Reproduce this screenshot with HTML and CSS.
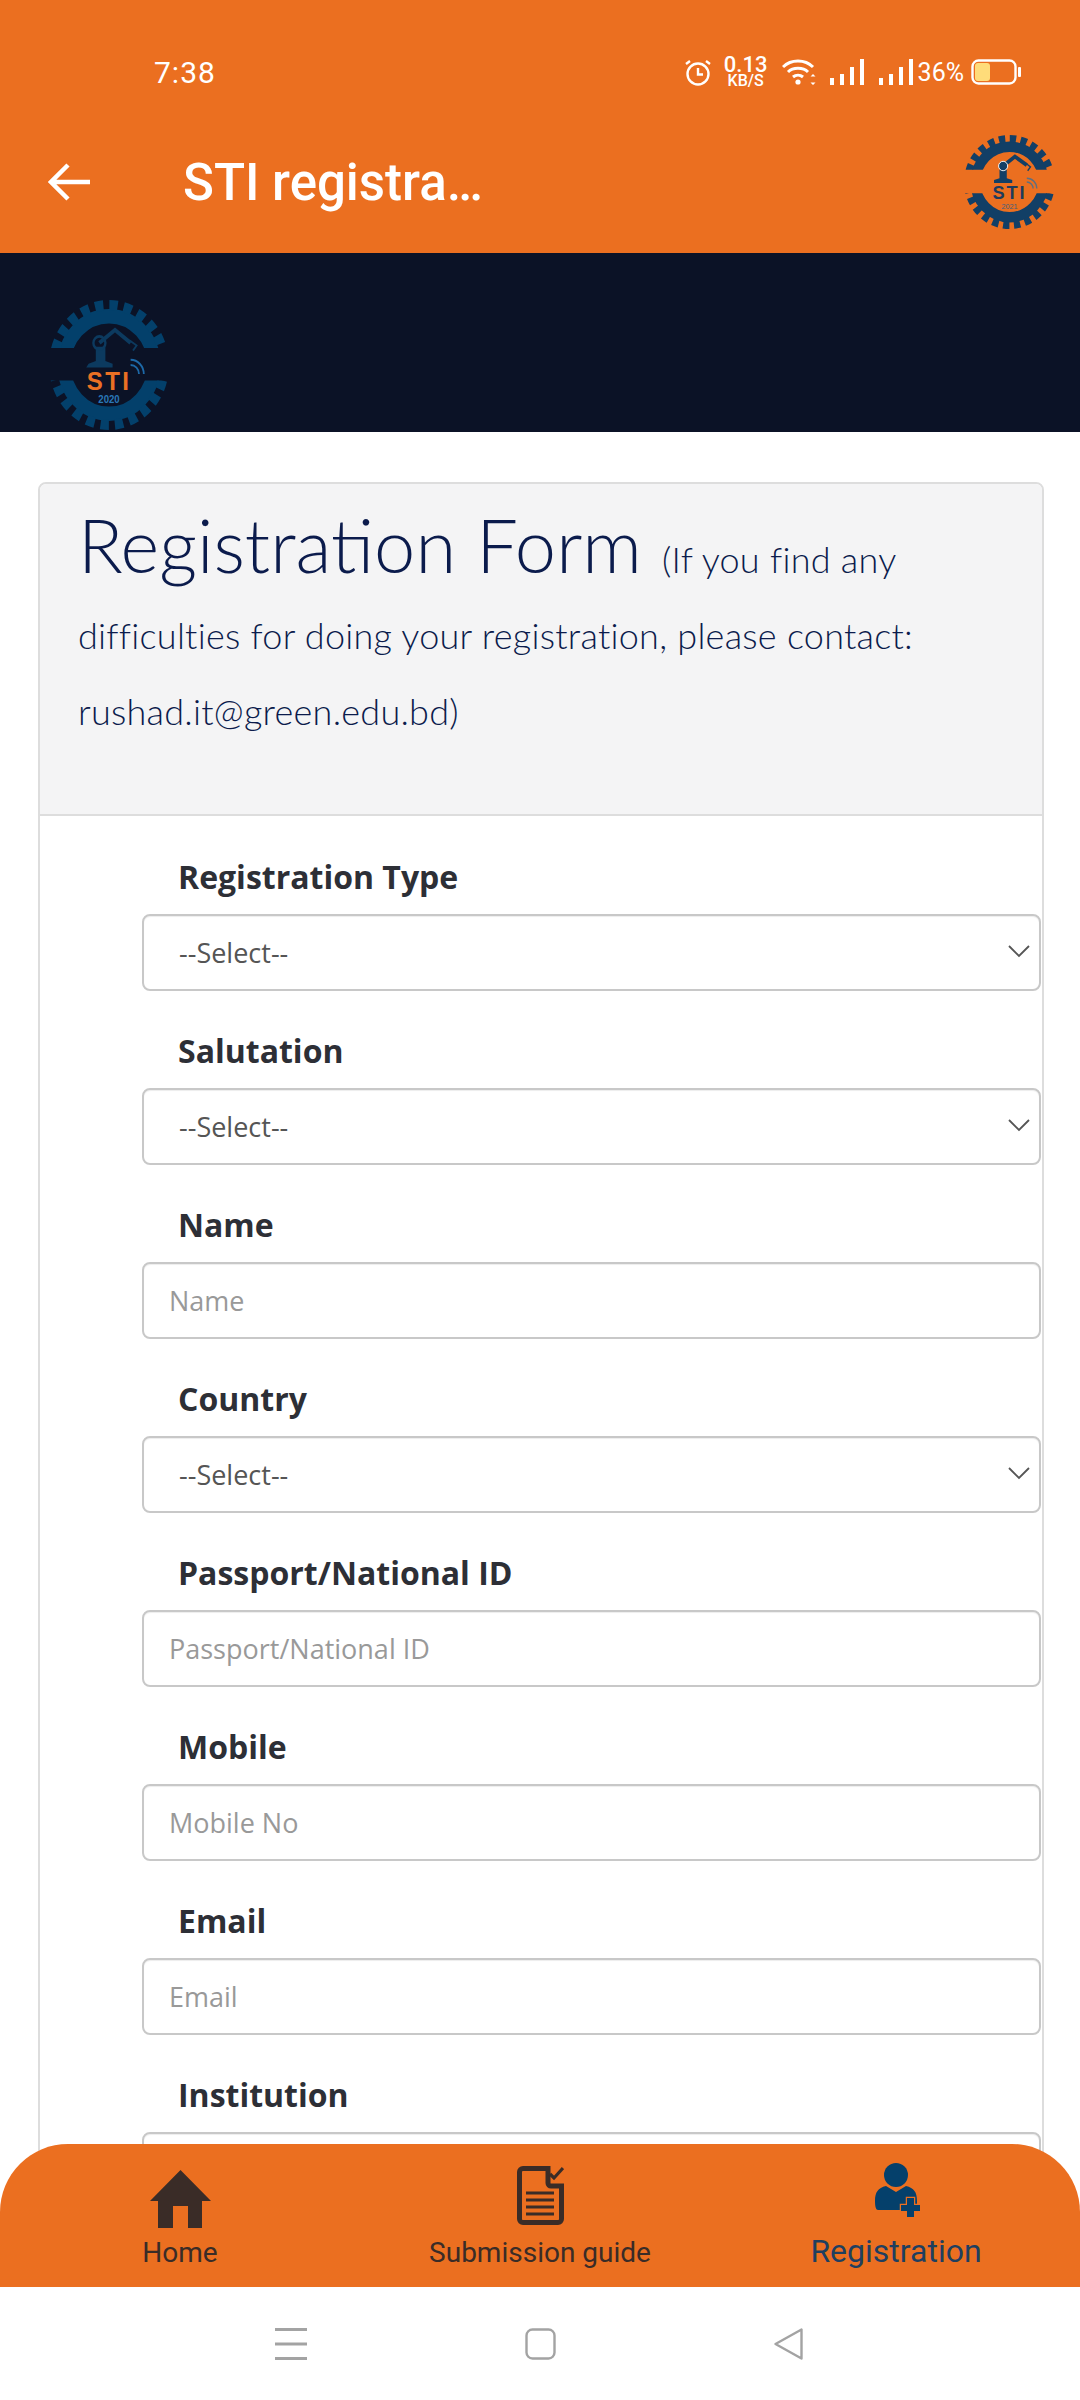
FILE: index.html
```html
<!DOCTYPE html>
<html lang="en">

<head>
    <meta charset="UTF-8">
    <meta name="viewport" content="width=device-width, initial-scale=1.0">
    <title>STI registration</title>
    <link rel="stylesheet" href="styles.css">
</head>

<body>
    <svg class="defs" width="0" height="0">
        <defs>
            <clipPath id="gearCut">
                <rect x="0" y="0" width="100" height="37"></rect>
                <rect x="0" y="62" width="100" height="38"></rect>
            </clipPath>
            <symbol id="gear" viewBox="0 0 100 100">
                <g clip-path="url(#gearCut)" fill="none" stroke="currentColor">
                    <circle cx="50" cy="50" r="37.5" stroke-width="11"></circle>
                    <circle cx="50" cy="50" r="46" stroke-width="8" stroke-dasharray="7 5.04"></circle>
                </g>
            </symbol>
        </defs>
    </svg>

    <div class="phone">
        <header class="appbar">
            <div class="status">
                <span class="time">7:38</span>
                <div class="status-icons">
                    <svg class="ic-alarm" width="26" height="27" viewBox="0 0 26 27" fill="none" stroke="#fff" stroke-width="2.4">
                        <circle cx="13" cy="15" r="10.5"></circle>
                        <path d="M13 9v6.5h5M1 5l4-3M25 5l-4-3"></path>
                    </svg>
                    <div class="speed"><span>0.13</span><span class="speed-unit">KB/S</span></div>
                    <svg class="ic-wifi" width="35" height="27" viewBox="0 0 35 27" fill="none" stroke="#fff" stroke-width="3">
                        <path d="M1 8c8-8 22-8 30 0M6 13c5-5 15-5 20 0M11 18c3-2.500 7-2.500 10 0"></path>
                        <circle cx="16" cy="23" r="2.600" fill="#fff" stroke="none"></circle>
                        <path d="M31 15l2.500 2.500h-5zM31 26l2.500-2.500h-5z" fill="#fff" stroke="none"></path>
                    </svg>
                    <svg class="ic-signal" width="34" height="27" viewBox="0 0 34 27" fill="#fff">
                        <rect x="0" y="19" width="4" height="7"></rect>
                        <rect x="10" y="15" width="4" height="11"></rect>
                        <rect x="20" y="8" width="4" height="18"></rect>
                        <rect x="30" y="0" width="4" height="26"></rect>
                    </svg>
                    <svg class="ic-signal ic-signal-2" width="34" height="27" viewBox="0 0 34 27" fill="#fff">
                        <rect x="0" y="19" width="4" height="7"></rect>
                        <rect x="10" y="15" width="4" height="11"></rect>
                        <rect x="20" y="8" width="4" height="18"></rect>
                        <rect x="30" y="0" width="4" height="26"></rect>
                    </svg>
                    <span class="percent">36%</span>
                    <svg class="ic-battery" width="50" height="26" viewBox="0 0 50 26">
                        <rect x="1.500" y="1.500" width="43" height="23" rx="6" fill="none" stroke="#fff" stroke-width="2.400"></rect>
                        <rect x="4" y="4" width="15" height="18" rx="3" fill="#ffdc7a"></rect>
                        <rect x="47" y="8" width="3" height="10" rx="1" fill="#fff"></rect>
                    </svg>
                </div>
            </div>
            <div class="titlebar">
                <svg class="back" width="42" height="40" viewBox="0 0 42 40" fill="none" stroke="#fff" stroke-width="4.500">
                    <path d="M42 20H4M20 3L3 20l17 17"></path>
                </svg>
                <h1 class="title">STI registra…</h1>
                <svg class="logo-small" width="91" height="94" viewBox="0 0 100 100" preserveAspectRatio="none">
                    <use href="#gear" width="100" height="100" class="gear-small"></use>
                    <path d="M33 51h20v-3l-6-2V37h-8v9l-6 2z" fill="#123f66"></path>
                    <path d="M43 33l13-10 13 9" fill="none" stroke="#123f66" stroke-width="4"></path>
                    <circle cx="43" cy="33" r="5" fill="#123f66" stroke="#fff" stroke-width="1"></circle>
                    <path d="M68 30l5 4-3 4" fill="none" stroke="#123f66" stroke-width="1.500"></path>
                    <path d="M69 50a7 7 0 0 1 7 7M69 46a11 11 0 0 1 11 11" fill="none" stroke="#5d6f80" stroke-width="1.500"></path>
                    <text x="50" y="68" class="logo-sti sti-dark">STI</text>
                    <text x="50" y="79" class="logo-year year-dark">2021</text>
                </svg>
            </div>
        </header>

        <div class="banner">
            <svg class="logo-big" width="120" height="130" viewBox="0 0 100 100" preserveAspectRatio="none">
                <use href="#gear" width="100" height="100" class="gear-big"></use>
                <path d="M31 52h22v-3l-6-2V36h-8v11l-6 2z" fill="#0c3a5f"></path>
                <path d="M42 33l13-10 13 10" fill="none" stroke="#0c3a5f" stroke-width="3"></path>
                <circle cx="42" cy="33" r="5" fill="none" stroke="#0c3a5f" stroke-width="2"></circle>
                <path d="M67 31l6 4-3 4" fill="none" stroke="#0c3a5f" stroke-width="1.500"></path>
                <path d="M68 50a7 7 0 0 1 7 7M68 46a11 11 0 0 1 11 11" fill="none" stroke="#1d69a8" stroke-width="1.500"></path>
                <text x="50" y="69" class="logo-sti sti-orange">STI</text>
                <text x="50" y="79" class="logo-year year-blue">2020</text>
            </svg>
        </div>

        <main class="card">
            <div class="card-head">
                <h2 class="form-title">Registration Form <small>(If you find any difficulties for doing your registration, please contact: rushad.it@green.edu.bd)</small></h2>
            </div>
            <form class="card-body">
                <div class="field">
                    <label for="regType">Registration Type</label>
                    <div class="select-wrap">
                        <select id="regType"><option>--Select--</option></select>
                        <svg class="chevron" width="22" height="13" viewBox="0 0 22 13" fill="none" stroke="#555" stroke-width="1.800"><path d="M1 1l10 10L21 1"></path></svg>
                    </div>
                </div>
                <div class="field">
                    <label for="salutation">Salutation</label>
                    <div class="select-wrap">
                        <select id="salutation"><option>--Select--</option></select>
                        <svg class="chevron" width="22" height="13" viewBox="0 0 22 13" fill="none" stroke="#555" stroke-width="1.800"><path d="M1 1l10 10L21 1"></path></svg>
                    </div>
                </div>
                <div class="field">
                    <label for="name">Name</label>
                    <input type="text" id="name" placeholder="Name">
                </div>
                <div class="field">
                    <label for="country">Country</label>
                    <div class="select-wrap">
                        <select id="country"><option>--Select--</option></select>
                        <svg class="chevron" width="22" height="13" viewBox="0 0 22 13" fill="none" stroke="#555" stroke-width="1.800"><path d="M1 1l10 10L21 1"></path></svg>
                    </div>
                </div>
                <div class="field">
                    <label for="passport">Passport/National ID</label>
                    <input type="text" id="passport" placeholder="Passport/National ID">
                </div>
                <div class="field">
                    <label for="mobile">Mobile</label>
                    <input type="text" id="mobile" placeholder="Mobile No">
                </div>
                <div class="field">
                    <label for="email">Email</label>
                    <input type="text" id="email" placeholder="Email">
                </div>
                <div class="field">
                    <label for="institution">Institution</label>
                    <input type="text" id="institution">
                </div>
            </form>
        </main>

        <div class="bottom">
            <nav class="tabbar">
                <a class="tab tab-home">
                    <svg width="61" height="58" viewBox="0 0 61 58" fill="#3a2c27">
                        <path d="M30.500 0L61 31H52V58H38V36H23V58H8V31H0z"></path>
                    </svg>
                    <span>Home</span>
                </a>
                <a class="tab tab-doc">
                    <svg width="47" height="59" viewBox="0 0 47 59" fill="none" stroke="#3a2c27">
                        <path d="M31 2.500H6A3.500 3.500 0 0 0 2.500 6v47A3.500 3.500 0 0 0 6 56.500h35a3.500 3.500 0 0 0 3.500-3.500V20H34a3 3 0 0 1-3-3z" stroke-width="5"></path>
                        <path d="M9 27h28M9 34h28M9 41h28M9 48h28" stroke-width="2.800"></path>
                        <path d="M33 8l4 4 9-10" stroke-width="3.200"></path>
                    </svg>
                    <span>Submission guide</span>
                </a>
                <a class="tab tab-reg">
                    <svg width="45" height="54" viewBox="0 0 45 54" fill="#05406b">
                        <circle cx="21" cy="12" r="12"></circle>
                        <path d="M0 38c0-9 3-13 11-15l10 6 10-6c8 2 11 6 11 15v9H3C1 47 0 44 0 38z"></path>
                        <path class="plus" d="M32 35h7v7h6v6h-6v6h-7v-6h-6v-6h6z"></path>
                    </svg>
                    <span>Registration</span>
                </a>
            </nav>
            <div class="sysnav">
                <svg width="32" height="32" viewBox="0 0 32 32" fill="#a3a3a3">
                    <rect x="0" y="0" width="32" height="3"></rect>
                    <rect x="0" y="14.500" width="32" height="3"></rect>
                    <rect x="0" y="29" width="32" height="3"></rect>
                </svg>
                <svg width="31" height="32" viewBox="0 0 31 32" fill="none" stroke="#a3a3a3" stroke-width="2.400">
                    <rect x="1.500" y="1.500" width="28" height="29" rx="6"></rect>
                </svg>
                <svg width="29" height="32" viewBox="0 0 29 32" fill="none" stroke="#a3a3a3" stroke-width="2.400" stroke-linejoin="round">
                    <path d="M27.500 1.500v29L1.500 16z"></path>
                </svg>
            </div>
        </div>
    </div>
</body>

</html>
```

FILE: styles.css
```css
* {
    box-sizing: border-box;
}

body {
    margin: 0;
    background-color: white;
    font-family: "Open Sans", sans-serif;
}

.defs {
    position: absolute;
}

.phone {
    position: relative;
    width: 1080px;
    height: 2400px;
    overflow: hidden;
}

/* app bar */
.appbar {
    height: 253px;
    padding-top: 48px;
    background-color: #eb6f20;
    color: white;
}

.status {
    display: flex;
    justify-content: space-between;
    align-items: center;
    height: 48px;
    margin-bottom: 16px;
    padding: 0 59px 0 154px;
}

.time {
    font-family: Roboto, sans-serif;
    font-size: 30px;
    letter-spacing: 1px;
}

.status-icons {
    display: flex;
    align-items: center;
}

.speed {
    display: flex;
    flex-direction: column;
    align-items: center;
    width: 36px;
    margin-left: 17px;
    font-family: Roboto, sans-serif;
    font-size: 22px;
    font-weight: 500;
    line-height: 18px;
}

.speed-unit {
    font-size: 16px;
    line-height: 14px;
}

.ic-wifi {
    margin-left: 18px;
}

.ic-signal {
    margin-left: 13px;
}

.ic-signal-2 {
    margin-left: 15px;
}

.percent {
    margin-left: 5px;
    font-family: Roboto, sans-serif;
    font-size: 25px;
}

.ic-battery {
    margin-left: 7px;
}

.titlebar {
    display: flex;
    align-items: center;
    height: 140px;
    padding: 0 25px 0 48px;
}

.title {
    flex: 1;
    margin: 0 0 0 93px;
    font-family: Roboto, sans-serif;
    font-size: 51px;
    font-weight: 500;
}

.logo-sti {
    font-family: "Liberation Sans", sans-serif;
    font-size: 20px;
    font-weight: bold;
    letter-spacing: 2px;
    text-anchor: middle;
}

.logo-year {
    font-family: "Liberation Sans", sans-serif;
    font-size: 8px;
    text-anchor: middle;
}

.gear-small {
    color: #123f66;
}

.gear-big {
    color: #03406b;
}

.sti-dark {
    fill: #1d3b5c;
}

.year-dark {
    fill: #3f5f7e;
}

.sti-orange {
    fill: #ea7024;
}

.year-blue {
    fill: #2a78b8;
    font-weight: bold;
}

/* dark strip */
.banner {
    height: 179px;
    padding: 47px 0 0 49px;
    background-color: #0b1226;
}

/* form card */
.card {
    width: 1006px;
    margin: 50px 0 0 38px;
    border: 2px solid #ddd;
    border-radius: 8px;
}

.card-head {
    height: 332px;
    padding: 23px 38px 0;
    border-bottom: 2px solid #ddd;
    border-radius: 6px 6px 0 0;
    background-color: #f4f4f5;
}

.form-title {
    margin: 0;
    font-family: Lato, sans-serif;
    font-size: 74px;
    font-weight: 300;
    line-height: 76px;
    color: #0b1b4c;
}

.form-title small {
    font-size: 36px;
    line-height: 1;
    letter-spacing: 0.25px;
}

.card-body {
    padding: 0 1px 0 102px;
}

.field {
    height: 174px;
}

.field label {
    display: block;
    height: 98px;
    padding: 39px 0 0 36px;
    font-size: 32px;
    font-weight: bold;
    line-height: 44px;
    color: #2d2f36;
}

.select-wrap {
    position: relative;
}

select,
input {
    display: block;
    width: 899px;
    height: 77px;
    border: 2px solid #c8c8c8;
    border-radius: 8px;
    background-color: white;
    box-shadow: inset 0 1px 1px rgba(0, 0, 0, 0.075);
    font-family: "Open Sans", sans-serif;
    font-size: 27px;
    color: #555;
}

select {
    padding-left: 35px;
    appearance: none;
}

input {
    padding-left: 25px;
}

input::placeholder {
    color: #999;
}

.chevron {
    position: absolute;
    top: 31px;
    right: 11px;
}

/* bottom bars */
.bottom {
    position: absolute;
    left: 0;
    right: 0;
    top: 2144px;
}

.tabbar {
    display: grid;
    grid-template-columns: 360px 360px 352px;
    height: 143px;
    border-radius: 68px 68px 0 0;
    background-color: #eb6f20;
}

.tab {
    display: flex;
    flex-direction: column;
    align-items: center;
    font-family: Roboto, sans-serif;
    font-size: 28px;
    line-height: 34px;
    color: #3a2c27;
}

.tab-home {
    padding-top: 26px;
}

.tab-home span {
    margin-top: 8px;
}

.tab-doc {
    padding-top: 22px;
}

.tab-doc span {
    margin-top: 11px;
}

.tab-reg {
    padding-top: 19px;
    font-size: 32px;
    line-height: 38px;
    color: #1f3f5f;
}

.tab-reg svg {
    margin-left: 3px;
}

.tab-reg span {
    margin-top: 15px;
}

.plus {
    stroke: #eb6f20;
    stroke-width: 2.5;
    paint-order: stroke;
}

.sysnav {
    display: flex;
    align-items: center;
    gap: 218px;
    height: 113px;
    padding: 0 0 0 275px;
    background-color: white;
}
```
